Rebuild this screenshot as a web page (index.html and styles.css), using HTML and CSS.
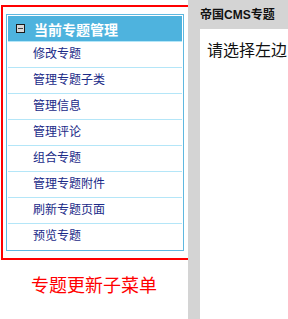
FILE: index.html
```html
<!DOCTYPE html>
<html lang="zh-CN">

<head>
  <meta charset="UTF-8" />
  <title>专题更新子菜单</title>
  <link rel="stylesheet" href="styles.css">
</head>

<body>
  <div class="left">
    <div class="frame">
      <div class="menu">
        <div class="menu-head">
          <span class="toggle"></span>
          <span>当前专题管理</span>
        </div>
        <div class="menu-item">修改专题</div>
        <div class="menu-item">管理专题子类</div>
        <div class="menu-item">管理信息</div>
        <div class="menu-item">管理评论</div>
        <div class="menu-item">组合专题</div>
        <div class="menu-item">管理专题附件</div>
        <div class="menu-item">刷新专题页面</div>
        <div class="menu-item">预览专题</div>
      </div>
    </div>
    <p class="caption">专题更新子菜单</p>
  </div>
  <div class="right">
    <div class="right-title">帝国CMS专题</div>
    <div class="right-body">请选择左边</div>
  </div>
</body>

</html>
```

FILE: styles.css
```css
html,
body {
  margin: 0;
  height: 100%;
}

body {
  display: flex;
  background-color: white;
  font-family: "Liberation Sans", "Noto Sans CJK SC", sans-serif;
  overflow: hidden;
}

.left {
  width: 188px;
  flex-shrink: 0;
  padding-top: 5px;
}

.frame {
  margin-left: 1px;
  width: 178px;
  border: 2px solid #ff0000;
  padding: 7px 4px 7px 3px;
}

.menu {
  border: 1px solid #5fb8e0;
  padding: 1px;
  background-color: white;
}

.menu-head {
  display: flex;
  align-items: center;
  gap: 9px;
  height: 25px;
  padding-left: 8px;
  background-color: #4eb3de;
  color: white;
  font-weight: bold;
  font-size: 14px;
  border-bottom: 1px solid #b4e6f8;
}

/* little collapse box in the header */
.toggle {
  box-sizing: border-box;
  width: 9px;
  height: 9px;
  border: 1px solid #1a1a1a;
  background: linear-gradient(#444, #444) center / 5px 1px no-repeat, #d8d8d8;
}

.menu-item {
  height: 25px;
  line-height: 25px;
  padding-left: 25px;
  font-size: 12px;
  color: #1a2a88;
  border-bottom: 1px solid #b4e6f8;
}

.menu-item:last-child {
  border-bottom: none;
}

.caption {
  margin: 11px 0 0;
  width: 188px;
  text-align: center;
  color: #ff0000;
  font-size: 18px;
}

.right {
  flex: 1;
  background-color: #d4d4d4;
  padding-left: 12px;
  display: flex;
  flex-direction: column;
}

.right-title {
  height: 29px;
  line-height: 30px;
  font-size: 12px;
  font-weight: bold;
  color: #111;
}

.right-body {
  flex: 1;
  background-color: white;
  padding: 8px 0 0 7px;
  font-size: 16px;
  color: #111;
  white-space: nowrap;
}
```
